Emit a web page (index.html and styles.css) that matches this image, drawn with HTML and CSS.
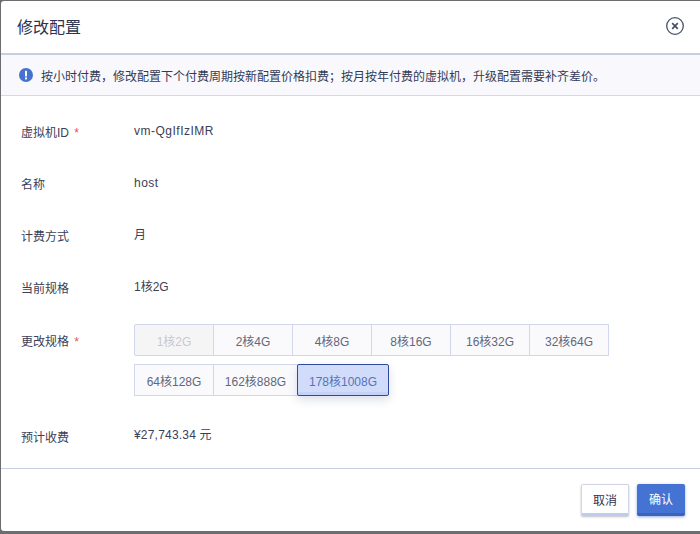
FILE: index.html
```html
<!DOCTYPE html>
<html lang="zh-CN">
<head>
    <meta charset="UTF-8">
    <title>修改配置</title>
    <link rel="stylesheet" href="styles.css">
</head>
<body>
<div class="modal">
    <div class="modal-head">
        <h1 class="modal-title">修改配置</h1>
        <svg class="close-icon" width="20" height="20" viewBox="0 0 20 20">
            <circle cx="10" cy="10" r="8.3" fill="none" stroke="#46506e" stroke-width="1.3"/>
            <path d="M7.2 7.2l5.6 5.6M12.8 7.2l-5.6 5.6" fill="none" stroke="#46506e" stroke-width="1.7"/>
        </svg>
    </div>
    <div class="notice">
        <svg class="notice-icon" width="14" height="14" viewBox="0 0 14 14">
            <circle cx="7" cy="7" r="7" fill="#4472ce"/>
            <rect x="6" y="2.8" width="2" height="5.6" fill="#fff"/>
            <rect x="6" y="9.4" width="2" height="2" fill="#fff"/>
        </svg>
        <span>按小时付费，修改配置下个付费周期按新配置价格扣费；按月按年付费的虚拟机，升级配置需要补齐差价。</span>
    </div>
    <div class="form">
        <div class="row">
            <div class="label">虚拟机ID <i>*</i></div>
            <div class="value spaced">vm-QgIfIzIMR</div>
        </div>
        <div class="row">
            <div class="label">名称</div>
            <div class="value spaced">host</div>
        </div>
        <div class="row">
            <div class="label">计费方式</div>
            <div class="value">月</div>
        </div>
        <div class="row">
            <div class="label">当前规格</div>
            <div class="value">1核2G</div>
        </div>
        <div class="row row-spec">
            <div class="label">更改规格 <i>*</i></div>
            <div class="specs">
                <div class="spec-line">
                    <a class="spec disabled">1核2G</a>
                    <a class="spec">2核4G</a>
                    <a class="spec">4核8G</a>
                    <a class="spec">8核16G</a>
                    <a class="spec">16核32G</a>
                    <a class="spec">32核64G</a>
                </div>
                <div class="spec-line">
                    <a class="spec">64核128G</a>
                    <a class="spec wide">162核888G</a>
                    <a class="spec wide selected">178核1008G</a>
                </div>
            </div>
        </div>
        <div class="row">
            <div class="label">预计收费</div>
            <div class="value price">¥27,743.34 元</div>
        </div>
    </div>
    <div class="modal-foot">
        <button class="btn btn-cancel">取消</button>
        <button class="btn btn-ok">确认</button>
    </div>
</div>
</body>
</html>
```

FILE: styles.css
```css
* {
    margin: 0;
    padding: 0;
    box-sizing: border-box;
}

body {
    width: 700px;
    height: 534px;
    overflow: hidden;
    padding: 1px 0 0 1px;
    background-color: #6c6d71;
    font-family: "Liberation Sans", "Noto Sans CJK SC", sans-serif;
    font-size: 12px;
    color: #3a4057;
}

.modal {
    width: 699px;
    height: 530px;
    background-color: #fff;
    border-radius: 3px 0 0 3px;
}

.modal-head {
    height: 54px;
    padding: 0 15px 3px 16px;
    border-bottom: 2px solid #c8cee2;
    display: flex;
    align-items: center;
    justify-content: space-between;
}

.modal-title {
    font-size: 16px;
    font-weight: normal;
    color: #2b3350;
}

.notice {
    height: 41px;
    padding-left: 18px;
    background-color: #f9f9fd;
    border-bottom: 1px solid #d5d8ea;
    display: flex;
    align-items: center;
    gap: 8px;
    color: #333a55;
}

.form {
    padding: 7px 0 0 20px;
}

.row {
    display: flex;
    min-height: 52px;
    align-items: center;
}

.row-spec {
    height: 84px;
    margin-top: 13px;
    align-items: flex-start;
}

.label {
    width: 113px;
    padding-top: 4px;
}

.label i {
    font-style: normal;
    color: #e8505b;
    margin-left: 2px;
}

.row-spec .label {
    padding-top: 8px;
}

.value {
    margin-top: 1px;
    color: #3a4057;
}

.spaced {
    margin-top: 3px;
    letter-spacing: 0.5px;
}

.price {
    margin-top: -1px;
    letter-spacing: 0.2px;
}

.specs {
    display: flex;
    flex-direction: column;
    gap: 8px;
}

.spec-line {
    display: flex;
}

.spec {
    width: 80px;
    height: 32px;
    margin-right: -1px;
    border: 1px solid #d3d7ec;
    background-color: #fafafd;
    color: #62677a;
    display: flex;
    align-items: center;
    justify-content: center;
}

.spec.wide {
    width: 85px;
}

.spec.disabled {
    background-color: #f5f5f6;
    color: #c9c9cd;
    border-radius: 2px 0 0 2px;
}

.spec.selected {
    width: 92px;
    background-color: #d0dcfa;
    border-color: #2d4a9d;
    border-radius: 2px;
    color: #5a72b8;
    box-shadow: inset 0 -3px 0 #c3d2f6, 0 4px 10px rgba(60, 80, 140, 0.18);
    position: relative;
}

.modal-foot {
    margin-top: 8px;
    border-top: 1px solid #c8cee2;
    padding: 15px 15px 0 0;
    display: flex;
    justify-content: flex-end;
    gap: 8px;
}

.btn {
    width: 48px;
    height: 32px;
    border-radius: 2px;
    font-family: inherit;
    font-size: 12px;
}

.btn-cancel {
    background-color: #fff;
    color: #2b3350;
    border: 1px solid #d0d4e4;
    border-bottom: 3px solid #bccdee;
    box-shadow: 0 1px 2px rgba(40, 50, 90, 0.3);
}

.btn-ok {
    background-color: #4473d4;
    color: #fff;
    border: 0;
    border-bottom: 3px solid #3c63bb;
    box-shadow: 0 1px 3px rgba(50, 90, 190, 0.5);
}
```
